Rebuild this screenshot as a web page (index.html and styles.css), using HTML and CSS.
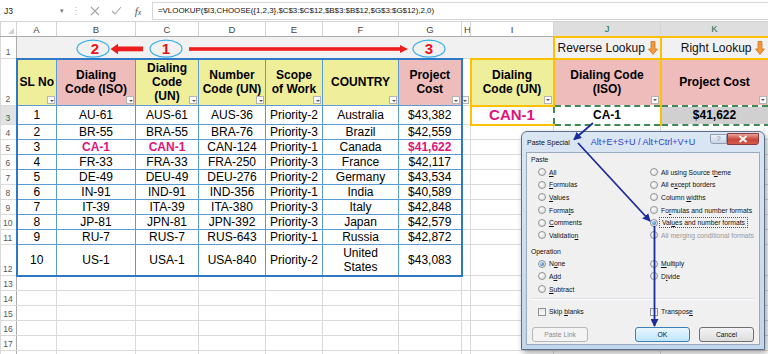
FILE: index.html
```html
<!DOCTYPE html>
<html>
<head>
<meta charset="utf-8">
<link rel="stylesheet" href="styles.css">
</head>
<body>
<div class="app">
  <div class="fbar">
    <div class="namebox">J3</div>
    <div class="nb-arrow">&#9662;</div>
    <div class="fsep">&#8942;</div>
    <div class="fbtn"><svg width="10" height="10" viewBox="0 0 10 10"><path d="M1 1L9 9M9 1L1 9" stroke="#a6a6a6" stroke-width="1.1" fill="none"/></svg></div>
    <div class="fbtn w22"><svg width="11" height="9" viewBox="0 0 11 9"><path d="M1 5L4 8L10 1" stroke="#a6a6a6" stroke-width="1.1" fill="none"/></svg></div>
    <div class="fx">f<span>x</span></div>
    <div class="formula">=VLOOKUP($I3,CHOOSE({1,2,3},$C$3:$C$12,$B$3:$B$12,$G$3:$G$12),2,0)</div>
  </div>

  <table class="sheet">
    <colgroup>
      <col class="c-rh"><col class="c-a"><col class="c-b"><col class="c-c"><col class="c-d"><col class="c-e"><col class="c-f"><col class="c-g"><col class="c-h"><col class="c-i"><col class="c-j"><col class="c-k">
    </colgroup>
    <tr class="hdr">
      <th class="corner"><span class="tri"></span></th>
      <th>A</th><th>B</th><th>C</th><th>D</th><th>E</th><th>F</th><th>G</th><th>H</th><th>I</th><th class="on">J</th><th class="on">K</th>
    </tr>
    <tr class="h22">
      <th class="rn">1</th>
      <td class="band"></td><td class="band"></td><td class="band"></td><td class="band"></td><td class="band"></td><td class="band"></td><td class="band"></td><td class="band"></td><td class="band"></td>
      <td class="band lk"><div class="lkin">Reverse Lookup<svg class="darr" width="10" height="14" viewBox="0 0 10 14"><path d="M3 0.5H7V8H9.5L5 13.5L0.5 8H3Z" fill="#f59a3c" stroke="#c86a14" stroke-width="0.7"/></svg></div></td>
      <td class="band lk"><div class="lkin end">Right Lookup<svg class="darr" width="10" height="14" viewBox="0 0 10 14"><path d="M3 0.5H7V8H9.5L5 13.5L0.5 8H3Z" fill="#f59a3c" stroke="#c86a14" stroke-width="0.7"/></svg></div></td>
    </tr>
    <tr class="h47">
      <th class="rn">2</th>
      <td class="t th y tl tt">SL No<i class="flt"></i></td>
      <td class="t th p tt">Dialing<br>Code (ISO)<i class="flt"></i></td>
      <td class="t th y tt">Dialing<br>Code<br>(UN)<i class="flt"></i></td>
      <td class="t th y tt">Number<br>Code (UN)<i class="flt"></i></td>
      <td class="t th y tt">Scope<br>of Work<i class="flt"></i></td>
      <td class="t th y tt">COUNTRY<i class="flt"></i></td>
      <td class="t th p tr tt">Project<br>Cost<i class="flt"></i></td>
      <td class="hc"><i class="flt"></i></td>
      <td class="th y o">Dialing<br>Code (UN)<i class="flt"></i></td>
      <td class="th p o ob">Dialing Code<br>(ISO)<i class="flt"></i></td>
      <td class="th p o ob">Project Cost<i class="flt"></i></td>
    </tr>
    <tr class="h19">
      <th class="rn sel">3</th>
      <td class="t tl">1</td><td class="t">AU-61</td><td class="t">AUS-61</td><td class="t">AUS-36</td><td class="t">Priority-2</td><td class="t">Australia</td><td class="t tr num">$43,382</td>
      <td></td>
      <td class="o od mg big">CAN-1</td>
      <td class="ants b">CA-1</td>
      <td class="ants b grayc">$41,622</td>
    </tr>
    <tr class="h15"><th class="rn">4</th><td class="t tl">2</td><td class="t">BR-55</td><td class="t">BRA-55</td><td class="t">BRA-76</td><td class="t">Priority-3</td><td class="t">Brazil</td><td class="t tr num">$42,559</td><td></td><td></td><td></td><td></td></tr>
    <tr class="h15"><th class="rn">5</th><td class="t tl">3</td><td class="t mg">CA-1</td><td class="t mg">CAN-1</td><td class="t">CAN-124</td><td class="t">Priority-1</td><td class="t">Canada</td><td class="t tr num mg">$41,622</td><td></td><td></td><td></td><td></td></tr>
    <tr class="h15"><th class="rn">6</th><td class="t tl">4</td><td class="t">FR-33</td><td class="t">FRA-33</td><td class="t">FRA-250</td><td class="t">Priority-3</td><td class="t">France</td><td class="t tr num">$42,117</td><td></td><td></td><td></td><td></td></tr>
    <tr class="h15"><th class="rn">7</th><td class="t tl">5</td><td class="t">DE-49</td><td class="t">DEU-49</td><td class="t">DEU-276</td><td class="t">Priority-2</td><td class="t">Germany</td><td class="t tr num">$43,534</td><td></td><td></td><td></td><td></td></tr>
    <tr class="h15"><th class="rn">8</th><td class="t tl">6</td><td class="t">IN-91</td><td class="t">IND-91</td><td class="t">IND-356</td><td class="t">Priority-1</td><td class="t">India</td><td class="t tr num">$40,589</td><td></td><td></td><td></td><td></td></tr>
    <tr class="h15"><th class="rn">9</th><td class="t tl">7</td><td class="t">IT-39</td><td class="t">ITA-39</td><td class="t">ITA-380</td><td class="t">Priority-3</td><td class="t">Italy</td><td class="t tr num">$42,848</td><td></td><td></td><td></td><td></td></tr>
    <tr class="h15"><th class="rn">10</th><td class="t tl">8</td><td class="t">JP-81</td><td class="t">JPN-81</td><td class="t">JPN-392</td><td class="t">Priority-3</td><td class="t">Japan</td><td class="t tr num">$42,579</td><td></td><td></td><td></td><td></td></tr>
    <tr class="h15"><th class="rn">11</th><td class="t tl">9</td><td class="t">RU-7</td><td class="t">RUS-7</td><td class="t">RUS-643</td><td class="t">Priority-1</td><td class="t">Russia</td><td class="t tr num">$42,872</td><td></td><td></td><td></td><td></td></tr>
    <tr class="h31"><th class="rn bot">12</th><td class="t tl tb">10</td><td class="t tb">US-1</td><td class="t tb">USA-1</td><td class="t tb">USA-840</td><td class="t tb">Priority-2</td><td class="t tb wrap">United<br>States</td><td class="t tr tb num">$43,083</td><td></td><td></td><td></td><td></td></tr>
    <tr class="h15"><th class="rn">13</th><td></td><td></td><td></td><td></td><td></td><td></td><td></td><td></td><td></td><td></td><td></td></tr>
    <tr class="h15"><th class="rn">14</th><td></td><td></td><td></td><td></td><td></td><td></td><td></td><td></td><td></td><td></td><td></td></tr>
    <tr class="h15"><th class="rn">15</th><td></td><td></td><td></td><td></td><td></td><td></td><td></td><td></td><td></td><td></td><td></td></tr>
    <tr class="h15"><th class="rn">16</th><td></td><td></td><td></td><td></td><td></td><td></td><td></td><td></td><td></td><td></td><td></td></tr>
    <tr class="h15"><th class="rn">17</th><td></td><td></td><td></td><td></td><td></td><td></td><td></td><td></td><td></td><td></td><td></td></tr>
    <tr class="h15"><th class="rn"></th><td></td><td></td><td></td><td></td><td></td><td></td><td></td><td></td><td></td><td></td><td></td></tr>
  </table>

  <div class="dialog">
    <div class="dlg-title">
      <span class="ttl">Paste Special</span>
      <span class="shortcut">Alt+E+S+U / Alt+Ctrl+V+U</span>
      <span class="help">?</span>
      <span class="close"><svg width="10" height="8" viewBox="0 0 10 8"><path d="M1.5 1L8.5 7M8.5 1L1.5 7" stroke="#fff" stroke-width="1.8" fill="none"/></svg></span>
    </div>
    <div class="dlg-body">
      <div class="grp">Paste</div>
      <div class="opts">
        <div class="opt"><i class="rb"></i><span><u>A</u>ll</span></div>
        <div class="opt"><i class="rb"></i><span>All using Source t<u>h</u>eme</span></div>
        <div class="opt"><i class="rb"></i><span><u>F</u>ormulas</span></div>
        <div class="opt"><i class="rb"></i><span>All e<u>x</u>cept borders</span></div>
        <div class="opt"><i class="rb"></i><span><u>V</u>alues</span></div>
        <div class="opt"><i class="rb"></i><span>Column <u>w</u>idths</span></div>
        <div class="opt"><i class="rb"></i><span>Forma<u>t</u>s</span></div>
        <div class="opt"><i class="rb"></i><span>Fo<u>r</u>mulas and number formats</span></div>
        <div class="opt"><i class="rb"></i><span><u>C</u>omments</span></div>
        <div class="opt"><i class="rb on"></i><span class="focus">Val<u>u</u>es and number formats</span></div>
        <div class="opt"><i class="rb"></i><span>Validatio<u>n</u></span></div>
        <div class="opt dim"><i class="rb"></i><span>All merging conditional formats</span></div>
      </div>
      <div class="grp op">Operation</div>
      <div class="opts">
        <div class="opt"><i class="rb on"></i><span>N<u>o</u>ne</span></div>
        <div class="opt"><i class="rb"></i><span><u>M</u>ultiply</span></div>
        <div class="opt"><i class="rb"></i><span>A<u>d</u>d</span></div>
        <div class="opt"><i class="rb"></i><span>D<u>i</u>vide</span></div>
        <div class="opt"><i class="rb"></i><span><u>S</u>ubtract</span></div>
      </div>
      <div class="sepline"></div>
      <div class="opts checks">
        <div class="opt"><i class="cb"></i><span>Skip <u>b</u>lanks</span></div>
        <div class="opt"><i class="cb"></i><span>Transpos<u>e</u></span></div>
      </div>
      <div class="btns">
        <span class="btn dis">Paste Link</span>
        <span class="btn ok">OK</span>
        <span class="btn cancel">Cancel</span>
      </div>
    </div>
  </div>

  <svg class="overlay" width="768" height="354" viewBox="0 0 768 354">
    <defs>
      <marker id="bh" markerUnits="userSpaceOnUse" markerWidth="8" markerHeight="8" viewBox="0 0 8 8" refX="7" refY="4" orient="auto">
        <path d="M0 0L8 4L0 8Z" fill="#1b2c9c"/>
      </marker>
    </defs>
    <ellipse cx="93" cy="48.7" rx="16" ry="8.5" fill="none" stroke="#33ade6" stroke-width="1.2"/>
    <ellipse cx="166" cy="48.7" rx="16" ry="8.5" fill="none" stroke="#33ade6" stroke-width="1.2"/>
    <ellipse cx="429" cy="48.7" rx="16" ry="8.5" fill="none" stroke="#33ade6" stroke-width="1.2"/>
    <text x="95" y="54" class="num-red" text-anchor="middle">2</text>
    <text x="166" y="54" class="num-red" text-anchor="middle">1</text>
    <text x="429" y="54" class="num-red" text-anchor="middle">3</text>
    <rect x="117" y="46.5" width="26" height="4.8" fill="#ee1c1c"/>
    <path d="M118 43.8V54.2L110.5 49Z" fill="#ee1c1c"/>
    <rect x="189" y="47.2" width="212" height="3.6" fill="#ee1c1c"/>
    <path d="M400 45V53L408 49Z" fill="#ee1c1c"/>
    <path d="M593 123L574 139.5" stroke="#1b2c9c" stroke-width="1.8" fill="none" marker-end="url(#bh)"/>
    <path d="M578 143L650 221" stroke="#1b2c9c" stroke-width="1.8" fill="none" marker-end="url(#bh)"/>
    <path d="M654.5 226V326" stroke="#1b2c9c" stroke-width="1.8" fill="none" marker-end="url(#bh)"/>
  </svg>
</div>
</body>
</html>
```

FILE: styles.css
```css
* { box-sizing: border-box; }
body { margin: 0; font-family: "Liberation Sans", Arial, sans-serif; background: #fff; }
.app { position: relative; width: 768px; height: 354px; overflow: hidden; background: #fff; }

/* formula bar */
.fbar { display: flex; align-items: center; height: 21px; color: #222; }
.namebox { width: 57px; padding-left: 4px; font-size: 8.5px; }
.nb-arrow { width: 10px; text-align: center; font-size: 7px; color: #777; }
.fsep { width: 18px; text-align: center; font-size: 10px; color: #bbb; }
.fbtn { width: 20px; display: flex; justify-content: center; align-items: center; }
.fbtn.w22 { width: 22px; }
.fx { width: 22px; text-align: center; font-family: "Liberation Serif", serif; font-style: italic; font-size: 11px; color: #555; }
.fx span { font-size: 8px; }
.formula { margin-left: 3px; flex: 1; height: 18px; border: 1px solid #d6d6d6; border-right: 0; padding-left: 5px; font-size: 7.9px; line-height: 16px; color: #111; white-space: nowrap; }

/* sheet */
.sheet { border-collapse: collapse; table-layout: fixed; width: 768px; }
.c-rh { width: 16px; } .c-a { width: 40px; } .c-b { width: 79px; } .c-c { width: 63px; } .c-d { width: 67px; }
.c-e { width: 57px; } .c-f { width: 76px; } .c-g { width: 63px; } .c-h { width: 9px; } .c-i { width: 83px; }
.c-j { width: 107px; } .c-k { width: 108px; }

.sheet td, .sheet th { border: 1px solid #dadada; padding: 0 2px; white-space: nowrap; overflow: hidden; position: relative; }
.sheet td { font-size: 12px; text-align: center; color: #000; line-height: 14px; }
.hdr { height: 15px; }
.hdr th { font-size: 9.5px; font-weight: normal; color: #444; background: #fff; border-color: #d4d4d4; border-bottom-color: #ababab; }
.hdr th.on { background: #dedede; color: #217346; }
.corner .tri { position: absolute; right: 2px; bottom: 2px; width: 0; height: 0; border-left: 6px solid transparent; border-bottom: 6px solid #d0d0d0; }
th.rn { font-size: 8.5px; font-weight: normal; color: #555; background: #fff; text-align: center; padding: 0 1px 0 0; border-right-color: #ababab; vertical-align: bottom; line-height: 12px; }
th.rn.sel { color: #217346; background: #e2e2e2; }

.h15 { height: 15px; } .h19 { height: 19px; } .h22 { height: 22px; } .h31 { height: 31px; } .h47 { height: 47px; }

.band { background: #f1f1f1; border-left-color: #f1f1f1 !important; border-right-color: #f1f1f1 !important; }
.band.lk { border: 2px solid #ffc000 !important; padding: 0 3px; }
.lkin { display: flex; align-items: center; justify-content: flex-start; gap: 3px; font-size: 12px; color: #111; }
.lkin.end { justify-content: flex-end; }
.darr { flex: none; }

.t { border-color: #5b9bd5 !important; }
.tl { border-left: 2px solid #2e78c4 !important; }
.tr { border-right: 2px solid #2e78c4 !important; }
.tb { border-bottom: 2px solid #2e78c4 !important; }
.tt { border-top: 2px solid #2e78c4 !important; }
.th { font-weight: bold; line-height: 14px; vertical-align: middle; }
.y { background: #efee9b; }
.p { background: #efbcbc; }
.o { border: 2px solid #ffc000 !important; }
.ob { border-bottom: 2px dashed #3d8a57 !important; }
.od { border-right: 2px dashed #3d8a57 !important; }
.num { text-align: right; padding-right: 3px; }
.sheet td.mg { color: #e0137a; font-weight: bold; }
.sheet td.big { font-size: 15px; }
.sheet td.b { font-weight: bold; }
.ants { border: 2px dashed #3d8a57 !important; }
.ants + .ants { border-left: 2px solid #ffc000 !important; }
.grayc { background: #d0d0d0; }
.wrap { line-height: 14px; }

.flt { position: absolute; right: 1px; bottom: 1px; width: 8px; height: 8px; border: 1px solid #b4b4b4; background: #fbfbfb; }
.flt::after { content: ""; position: absolute; left: 1.5px; top: 2.5px; border-left: 2px solid transparent; border-right: 2px solid transparent; border-top: 2px solid #555; }

/* dialog */
.dialog { position: absolute; left: 521px; top: 131px; width: 244px; height: 219px; border: 1px solid #5d6f87; border-radius: 6px 6px 0 0; background: linear-gradient(#dbe6f4, #c4d6ec); padding: 0 4px 4px; box-shadow: 2px 3px 6px rgba(0,0,0,0.35); display: flex; flex-direction: column; }
.dlg-title { height: 20px; display: flex; align-items: center; }
.ttl { font-size: 7px; color: #111; padding-left: 1px; }
.shortcut { font-size: 9px; color: #2c3fce; margin-left: 21px; }
.help { margin-left: auto; align-self: flex-start; margin-top: 2px; width: 17px; height: 10px; border: 1px solid #8d9cb0; border-radius: 0 0 0 3px; background: linear-gradient(#eef2f8, #c9d4e3); font-size: 8px; line-height: 8px; text-align: center; color: #8b98a9; }
.close { align-self: flex-start; margin-top: 1px; margin-right: 1px; width: 32px; height: 12px; border: 1px solid #8a3b3b; border-radius: 0 0 3px 0; background: linear-gradient(#e9a39b, #c9463a 55%, #d65a4b); display: flex; align-items: center; justify-content: center; }
.dlg-body { flex: 1; background: #f0f0f0; border: 1px solid #9aabbf; padding: 0 0 0 4px; display: flex; flex-direction: column; font-size: 6.8px; color: #111; }
.grp { height: 12px; line-height: 12px; margin-top: 1px; font-size: 6.8px; }
.grp.op { margin-top: 4px; }
.opts { display: grid; grid-template-columns: 112px 1fr; grid-auto-rows: 12.6px; padding-left: 7px; }
.opt { display: flex; align-items: center; gap: 3px; white-space: nowrap; }
.opt.dim { color: #9a9a9a; }
.rb { flex: none; width: 8px; height: 8px; border-radius: 50%; border: 1px solid #8f9396; background: radial-gradient(circle at 40% 35%, #fdfdfd, #d8d8d8); position: relative; }
.rb.on::after { content: ""; position: absolute; left: 1px; top: 1px; width: 4px; height: 4px; border-radius: 50%; background: radial-gradient(circle at 35% 35%, #9fd6ff, #1b5fb0); }
.cb { flex: none; width: 8px; height: 8px; border: 1px solid #8f9396; background: linear-gradient(#e6e6e6, #fafafa); }
.focus { outline: 1px dotted #555; outline-offset: 1px; padding: 0 1px; }
.sepline { margin: 3px 4px 0 0; border-top: 1px solid #d9dfe5; border-bottom: 1px solid #fff; }
.checks { margin-top: 5px; }
.btns { display: flex; margin-top: 9px; padding-left: 1px; }
.btn { width: 56px; height: 15px; border: 1px solid #707070; border-radius: 3px; background: linear-gradient(#f3f3f3, #dddddd); font-size: 6.8px; text-align: center; line-height: 13px; }
.btn.dis { border-color: #b3b7ba; color: #8e8e8e; background: #f4f4f4; }
.btn.ok { margin-left: 47px; width: 55px; border-color: #3c7fb1; background: linear-gradient(#eaf6fd, #bee6fd); }
.btn.cancel { margin-left: 9px; width: 55px; }

.overlay { position: absolute; left: 0; top: 0; pointer-events: none; }
.num-red { font-family: "Liberation Sans", Arial, sans-serif; font-weight: bold; font-size: 15px; fill: #e8141b; }
```
